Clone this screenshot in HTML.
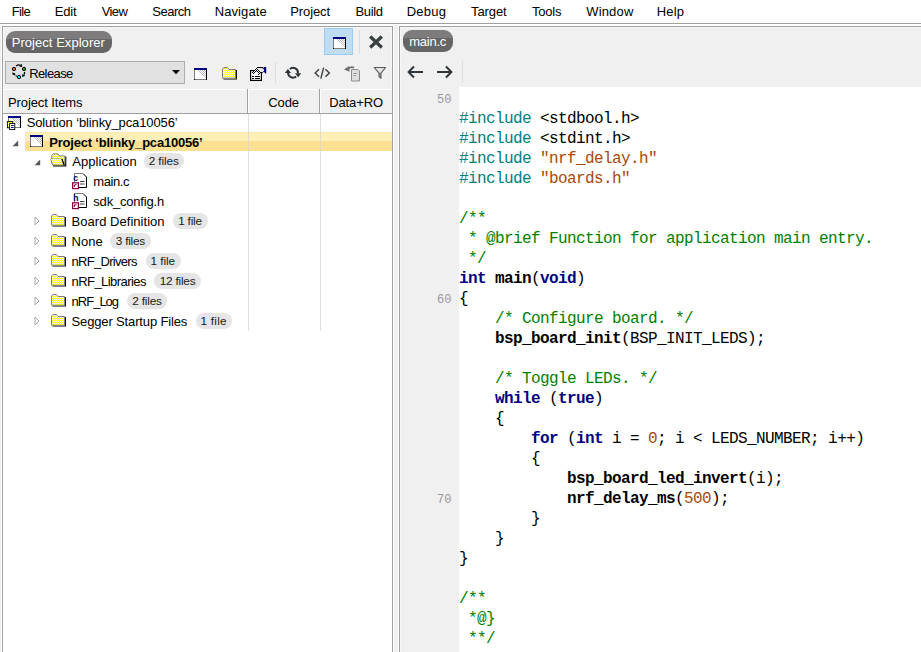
<!DOCTYPE html>
<html><head><meta charset="utf-8"><title>IDE</title>
<style>
html,body{margin:0;padding:0;}
body{width:921px;height:652px;overflow:hidden;background:#fff;position:relative;font-family:"Liberation Sans",sans-serif;font-size:13px;color:#000;}
.abs{position:absolute;}
.pill{position:absolute;border-radius:9px;height:22px;}
.t{position:absolute;white-space:nowrap;line-height:20px;height:20px;}
.badge{position:absolute;background:#e5e5e5;border-radius:8.3px;height:16.6px;}
.code{position:absolute;left:459px;top:89px;margin:0;font-family:"Liberation Mono",monospace;font-size:16px;letter-spacing:-0.6px;line-height:20px;white-space:pre;color:#000;}
.code b{font-weight:bold;}
.k{color:#000080;font-weight:bold;}
.p{color:#008080;}
.s{color:#a8480a;}
.c{color:#008000;}
.ln{position:absolute;width:30px;text-align:right;left:421.5px;font-family:"Liberation Mono",monospace;font-size:12px;line-height:20px;color:#9a9a9a;}
</style></head><body>
<svg width="0" height="0" style="position:absolute"><defs>
<pattern id="chk" width="2" height="2" patternUnits="userSpaceOnUse"><rect width="2" height="2" fill="#fff"/><rect width="1" height="1" fill="#000"/><rect x="1" y="1" width="1" height="1" fill="#000"/></pattern>
<pattern id="chkg" width="2" height="2" patternUnits="userSpaceOnUse"><rect width="2" height="2" fill="#fff"/><rect width="1" height="1" fill="#c0c0c0"/><rect x="1" y="1" width="1" height="1" fill="#c0c0c0"/></pattern>
<pattern id="chky" width="2" height="2" patternUnits="userSpaceOnUse"><rect width="2" height="2" fill="#ffff00"/><rect width="1" height="1" fill="#fff"/><rect x="1" y="1" width="1" height="1" fill="#fff"/></pattern>
</defs></svg>
<div class="abs" style="left:0;top:23px;width:921px;height:1px;background:#a0a0a0"></div>
<div class="abs" style="left:0;top:25px;width:1px;height:627px;background:#f0f0f0"></div>
<div class="abs" style="left:394px;top:25px;width:4px;height:627px;background:#f0f0f0"></div>
<!-- left panel frame -->
<div class="abs" style="left:2px;top:26px;width:391px;height:640px;border:1px solid #a0a0a0;box-sizing:border-box;background:#f0f0f0;box-shadow:inset 1px 1px 0 #f7f7f7,inset -1px 0 0 #f7f7f7"></div>
<!-- right panel frame -->
<div class="abs" style="left:399px;top:26px;width:540px;height:640px;border:1px solid #a0a0a0;box-sizing:border-box;background:#f0f0f0;box-shadow:inset 1px 1px 0 #f7f7f7"></div>

<div class="pill" style="left:6px;top:31px;width:106px;background:linear-gradient(#7d7b7b 0,#7d7b7b 8px,#666 8px,#666 100%)"></div>
<div class="pill" style="left:403px;top:30px;width:50px;background:linear-gradient(#7d7b7b 0,#7d7b7b 8px,#666 8px,#666 100%)"></div>
<div class="abs" style="left:324px;top:28px;width:29px;height:27px;background:#bfdcf2;border:1px solid #99ccf5;box-sizing:border-box"></div>
<svg class="abs" style="left:333px;top:37px" width="13" height="12" viewBox="0 0 13 12" preserveAspectRatio="none" shape-rendering="crispEdges"><rect x="0" y="0" width="13" height="12" fill="#fff"/><polygon points="2,2 12,2 12,11" fill="url(#chkg)"/><rect x="0" y="0" width="13" height="2" fill="#000080"/><rect x="0" y="2" width="1" height="10" fill="#808080"/><rect x="12" y="2" width="1" height="10" fill="#000"/><rect x="1" y="11" width="11" height="1" fill="#808080"/><rect x="0" y="11" width="1" height="1" fill="#000"/></svg>
<div class="abs" style="left:359px;top:30px;width:1px;height:24px;background:#dcdcdc"></div>
<svg class="abs" style="left:368px;top:34px" width="16" height="16" viewBox="0 0 16 16"><path d="M2.2,2.5 L13.8,13.5 M13.8,2.5 L2.2,13.5" stroke="#3a3f42" stroke-width="3.2" fill="none"/></svg>
<div class="abs" style="left:5px;top:61px;width:180px;height:23px;background:#e1e1e1;border:1px solid #adadad;box-sizing:border-box"></div>
<svg class="abs" style="left:171px;top:69px" width="10" height="6" viewBox="0 0 10 6"><polygon points="1,1 9,1 5,5.2" fill="#000"/></svg>
<svg class="abs" style="left:10px;top:63px" width="18" height="18" viewBox="0 0 18 18"><g fill="none" stroke="#000" stroke-width="1.3"><path d="M6,3 Q8.4,1.2 10.6,2.4"/><path d="M14.6,9 L14.2,11.6" /><path d="M4,11 L6.6,13.4" stroke-dasharray="1.6 0.8"/></g><polygon points="12.1,0.8 12,4 9.2,3.5" fill="#000"/><polygon points="12,13.9 12.4,11 15.3,12.8" fill="#000"/><polygon points="2,9.4 5.2,10.2 3,12.2" fill="#000"/><circle cx="4" cy="6" r="1.7" fill="#e86000" stroke="#000" stroke-width="1"/><circle cx="14" cy="6" r="1.7" fill="#00a000" stroke="#000" stroke-width="1"/><circle cx="9" cy="14" r="1.7" fill="#00c8f0" stroke="#000" stroke-width="1"/></svg>
<svg class="abs" style="left:194px;top:68px" width="13" height="12" viewBox="0 0 13 12" preserveAspectRatio="none" shape-rendering="crispEdges"><rect x="0" y="0" width="13" height="12" fill="#fff"/><polygon points="2,2 12,2 12,11" fill="url(#chkg)"/><rect x="0" y="0" width="13" height="2" fill="#000080"/><rect x="0" y="2" width="1" height="10" fill="#808080"/><rect x="12" y="2" width="1" height="10" fill="#000"/><rect x="1" y="11" width="11" height="1" fill="#808080"/><rect x="0" y="11" width="1" height="1" fill="#000"/></svg>
<svg class="abs" style="left:222px;top:67px" width="15" height="13" viewBox="0 0 15 13"><path d="M1.5,12 H14.4 V3" fill="none" stroke="#000" stroke-width="1.1"/><path d="M0.5,11.2 V2 L1.8,0.5 H5.6 L7,2.5 H13.5 V11.2 Z" fill="url(#chky)" stroke="#808080" stroke-width="1"/></svg>
<svg class="abs" style="left:250px;top:66px" width="17" height="16" viewBox="0 0 17 16"><rect x="0.6" y="4.6" width="10.8" height="9.8" fill="#fff" stroke="#000" stroke-width="1.2"/><path d="M2,10.5 H4 M5,10.5 H10 M2,12.5 H4 M5,12.5 H10" stroke="#000" stroke-width="1.1"/><path d="M7.2,1.3 H12.6 L13.6,2.6 V5.4 L12.4,6.6 H9 Z" fill="#e4e4e4"/><path d="M2,6.6 L3.5,8.4 L6.4,4.6 L8.5,9 L10.6,6.4 L7,1.8 Z" fill="url(#chk)" shape-rendering="crispEdges"/><path d="M7,1.5 H12.6 L13.8,2.8" fill="none" stroke="#000" stroke-width="1.1"/><path d="M10.6,6.6 H12.4 L13.8,5.4" fill="none" stroke="#000" stroke-width="1"/><path d="M14,1 H16.2 V8 L15.6,7.6 L14,6 Z" fill="#000080"/></svg>
<div class="abs" style="left:275px;top:62px;width:1px;height:22px;background:#dcdcdc"></div>
<svg class="abs" style="left:284px;top:65px" width="18" height="16" viewBox="0 0 18 16"><g fill="none" stroke="#2b3134" stroke-width="2"><path d="M5.85,4.05 A4.9,4.9 0 0 1 13.9,8.4"/><path d="M4.1,7.6 A4.9,4.9 0 0 0 12.15,11.55"/></g><polygon points="0.8,8 3.9,4 7,8" fill="#2b3134"/><polygon points="11,8.2 17.2,8.2 14.1,12.2" fill="#2b3134"/></svg>
<svg class="abs" style="left:314px;top:66px" width="17" height="14" viewBox="0 0 17 14"><g fill="none" stroke="#3a3f42" stroke-width="1.4"><path d="M5,3.2 L1.2,7 L5,10.8"/><path d="M11.5,3.2 L15.3,7 L11.5,10.8"/><path d="M9.6,1.6 L6.8,12.6"/></g></svg>
<svg class="abs" style="left:343px;top:64px" width="19" height="19" viewBox="0 0 19 19"><path d="M8.5,5.5 H15 L16.5,7 V17 H8.5 Z" fill="#dedede" stroke="#8c8c8c" stroke-width="1"/><path d="M10.5,9.5 H14 M10.5,11.5 H13" stroke="#9a9a9a" stroke-width="1"/><path d="M4.5,5.5 Q7,2.2 11,3.6" fill="none" stroke="#707070" stroke-width="1.8"/><polygon points="1,5.4 6,2 6.6,7.8" fill="#707070"/></svg>
<svg class="abs" style="left:373px;top:66px" width="14" height="14" viewBox="0 0 14 14"><path d="M1.2,1.5 H12.6 L8,7.2 V12.2 L6,10.6 V7.2 Z" fill="#e2e2e2" stroke="#5a5a5a" stroke-width="1.1" stroke-linejoin="round"/><path d="M7,7 V11.4" stroke="#707070" stroke-width="1.6"/></svg>
<svg class="abs" style="left:406px;top:64px" width="18" height="16" viewBox="0 0 18 16"><path d="M8,2.5 L2.6,8 L8,13.5 M2.6,8 H17" fill="none" stroke="#2f3538" stroke-width="2"/></svg>
<svg class="abs" style="left:436px;top:64px" width="18" height="16" viewBox="0 0 18 16"><path d="M10,2.5 L15.4,8 L10,13.5 M15.4,8 H1" fill="none" stroke="#2f3538" stroke-width="2"/></svg>
<div class="abs" style="left:462px;top:61px;width:1px;height:22px;background:#dcdcdc"></div>
<div class="abs" style="left:3px;top:89px;width:389px;height:24px;background:#f0f0f0"></div>
<div class="abs" style="left:3px;top:113px;width:389px;height:1px;background:#a0a0a0"></div>
<div class="abs" style="left:3px;top:114px;width:389px;height:538px;background:#fff"></div>
<div class="abs" style="left:3px;top:89px;width:389px;height:1px;background:#fff"></div>
<div class="abs" style="left:3px;top:89px;width:1px;height:24px;background:#fff"></div>
<div class="abs" style="left:247px;top:89px;width:1px;height:25px;background:#a0a0a0"></div>
<div class="abs" style="left:248px;top:89px;width:1px;height:24px;background:#fff"></div>
<div class="abs" style="left:319px;top:89px;width:1px;height:25px;background:#a0a0a0"></div>
<div class="abs" style="left:320px;top:89px;width:1px;height:24px;background:#fff"></div>
<div class="abs" style="left:25px;top:132px;width:367px;height:19px;background:linear-gradient(#fce8a8 0,#fce8a8 1px,#feefb6 1px,#feefb6 9px,#fde092 9px,#fde092 100%)"></div>
<div class="abs" style="left:248px;top:114px;width:1px;height:217px;background:rgba(212,212,212,0.72)"></div>
<div class="abs" style="left:320px;top:114px;width:1px;height:217px;background:rgba(212,212,212,0.72)"></div>
<svg class="abs" style="left:8px;top:116px" width="13" height="12" viewBox="0 0 13 12" preserveAspectRatio="none" shape-rendering="crispEdges"><rect x="0" y="0" width="13" height="12" fill="#fff"/><polygon points="2,2 12,2 12,11" fill="url(#chkg)"/><rect x="0" y="0" width="13" height="2" fill="#000080"/><rect x="0" y="2" width="1" height="10" fill="#808080"/><rect x="12" y="2" width="1" height="10" fill="#000"/><rect x="1" y="11" width="11" height="1" fill="#808080"/><rect x="0" y="11" width="1" height="1" fill="#000"/></svg>
<svg class="abs" style="left:6px;top:121px" width="10" height="10" viewBox="0 0 10 10"><rect x="1.4" y="0.6" width="5.4" height="6.2" fill="url(#chky)" stroke="#000" stroke-width="0.9"/><rect x="3.6" y="2.4" width="5.2" height="6.2" fill="#fff" stroke="#000" stroke-width="0.9"/><rect x="5" y="4" width="2.6" height="1" fill="#000080"/><rect x="5" y="6" width="2.6" height="1" fill="#000080"/></svg>
<svg class="abs" style="left:11.9px;top:139.6px" width="7" height="7" viewBox="0 0 7 7"><polygon points="0.6,6.2 6.2,6.2 6.2,0.6" fill="#555"/></svg>
<svg class="abs" style="left:30px;top:135px" width="13" height="12" viewBox="0 0 13 12" preserveAspectRatio="none" shape-rendering="crispEdges"><rect x="0" y="0" width="13" height="12" fill="#fff"/><polygon points="2,2 12,2 12,11" fill="url(#chkg)"/><rect x="0" y="0" width="13" height="2" fill="#000080"/><rect x="0" y="2" width="1" height="10" fill="#808080"/><rect x="12" y="2" width="1" height="10" fill="#000"/><rect x="1" y="11" width="11" height="1" fill="#808080"/><rect x="0" y="11" width="1" height="1" fill="#000"/></svg>
<svg class="abs" style="left:34px;top:158.6px" width="7" height="7" viewBox="0 0 7 7"><polygon points="0.6,6.2 6.2,6.2 6.2,0.6" fill="#555"/></svg>
<svg class="abs" style="left:50px;top:153.4px" width="17" height="14" viewBox="0 0 17 14"><path d="M3,12.9 H15.7 V3.6" fill="none" stroke="#000" stroke-width="1.2"/><path d="M1.8,6 V2.4 L3,0.9 H8 L9,2.9 H14.8 V12 H3 Z" fill="url(#chky)" stroke="#808080" stroke-width="1"/><path d="M0.6,6.1 H11.8 L14,12.1 H2.6 Z" fill="url(#chky)" stroke="#707070" stroke-width="1"/><path d="M0.6,6.6 H11.4" stroke="#fff" stroke-width="0.9"/><path d="M11.9,6 L14.2,12.2" stroke="#000" stroke-width="1.2"/></svg>
<svg class="abs" style="left:71.5px;top:172.5px" width="16" height="17" viewBox="0 0 16 17"><path d="M2.5,0.5 H11 L14.5,4 V14.5 H2.5 Z" fill="#fff" stroke="#000" stroke-width="1"/><path d="M2.5,14 V0.5 H11" fill="none" stroke="#808080" stroke-width="1"/><path d="M8,8.5 H12.5 M8,11 H12.5" stroke="#404040" stroke-width="1"/><text x="1.2" y="8.2" font-family="Liberation Sans, sans-serif" font-weight="bold" font-size="8.5" fill="#00006a">c</text><rect x="0.6" y="9.8" width="5.8" height="5.8" fill="#fff" stroke="#800040" stroke-width="1.2"/><path d="M2.3,14 V12.4 Q2.4,11.6 4.6,11.8" fill="none" stroke="#800040" stroke-width="1.1"/></svg>
<svg class="abs" style="left:71.5px;top:192.5px" width="16" height="17" viewBox="0 0 16 17"><path d="M2.5,0.5 H11 L14.5,4 V14.5 H2.5 Z" fill="#fff" stroke="#000" stroke-width="1"/><path d="M2.5,14 V0.5 H11" fill="none" stroke="#808080" stroke-width="1"/><path d="M8,8.5 H12.5 M8,11 H12.5" stroke="#404040" stroke-width="1"/><text x="1.2" y="8.2" font-family="Liberation Sans, sans-serif" font-weight="bold" font-size="8.5" fill="#00006a">h</text><rect x="0.6" y="9.8" width="5.8" height="5.8" fill="#fff" stroke="#800040" stroke-width="1.2"/><path d="M2.3,14 V12.4 Q2.4,11.6 4.6,11.8" fill="none" stroke="#800040" stroke-width="1.1"/></svg>
<svg class="abs" style="left:33.6px;top:216px" width="7" height="10" viewBox="0 0 7 10"><polygon points="1,1 5,5 1,9" fill="#fff" stroke="#a6a6a6" stroke-width="1"/></svg>
<svg class="abs" style="left:51.2px;top:214.4px" width="15" height="13" viewBox="0 0 15 13"><path d="M1.5,12 H14.4 V3" fill="none" stroke="#000" stroke-width="1.1"/><path d="M0.5,11.2 V2 L1.8,0.5 H5.6 L7,2.5 H13.5 V11.2 Z" fill="url(#chky)" stroke="#808080" stroke-width="1"/></svg>
<svg class="abs" style="left:33.6px;top:236px" width="7" height="10" viewBox="0 0 7 10"><polygon points="1,1 5,5 1,9" fill="#fff" stroke="#a6a6a6" stroke-width="1"/></svg>
<svg class="abs" style="left:51.2px;top:234.4px" width="15" height="13" viewBox="0 0 15 13"><path d="M1.5,12 H14.4 V3" fill="none" stroke="#000" stroke-width="1.1"/><path d="M0.5,11.2 V2 L1.8,0.5 H5.6 L7,2.5 H13.5 V11.2 Z" fill="url(#chky)" stroke="#808080" stroke-width="1"/></svg>
<svg class="abs" style="left:33.6px;top:256px" width="7" height="10" viewBox="0 0 7 10"><polygon points="1,1 5,5 1,9" fill="#fff" stroke="#a6a6a6" stroke-width="1"/></svg>
<svg class="abs" style="left:51.2px;top:254.4px" width="15" height="13" viewBox="0 0 15 13"><path d="M1.5,12 H14.4 V3" fill="none" stroke="#000" stroke-width="1.1"/><path d="M0.5,11.2 V2 L1.8,0.5 H5.6 L7,2.5 H13.5 V11.2 Z" fill="url(#chky)" stroke="#808080" stroke-width="1"/></svg>
<svg class="abs" style="left:33.6px;top:276px" width="7" height="10" viewBox="0 0 7 10"><polygon points="1,1 5,5 1,9" fill="#fff" stroke="#a6a6a6" stroke-width="1"/></svg>
<svg class="abs" style="left:51.2px;top:274.4px" width="15" height="13" viewBox="0 0 15 13"><path d="M1.5,12 H14.4 V3" fill="none" stroke="#000" stroke-width="1.1"/><path d="M0.5,11.2 V2 L1.8,0.5 H5.6 L7,2.5 H13.5 V11.2 Z" fill="url(#chky)" stroke="#808080" stroke-width="1"/></svg>
<svg class="abs" style="left:33.6px;top:296px" width="7" height="10" viewBox="0 0 7 10"><polygon points="1,1 5,5 1,9" fill="#fff" stroke="#a6a6a6" stroke-width="1"/></svg>
<svg class="abs" style="left:51.2px;top:294.4px" width="15" height="13" viewBox="0 0 15 13"><path d="M1.5,12 H14.4 V3" fill="none" stroke="#000" stroke-width="1.1"/><path d="M0.5,11.2 V2 L1.8,0.5 H5.6 L7,2.5 H13.5 V11.2 Z" fill="url(#chky)" stroke="#808080" stroke-width="1"/></svg>
<svg class="abs" style="left:33.6px;top:316px" width="7" height="10" viewBox="0 0 7 10"><polygon points="1,1 5,5 1,9" fill="#fff" stroke="#a6a6a6" stroke-width="1"/></svg>
<svg class="abs" style="left:51.2px;top:314.4px" width="15" height="13" viewBox="0 0 15 13"><path d="M1.5,12 H14.4 V3" fill="none" stroke="#000" stroke-width="1.1"/><path d="M0.5,11.2 V2 L1.8,0.5 H5.6 L7,2.5 H13.5 V11.2 Z" fill="url(#chky)" stroke="#808080" stroke-width="1"/></svg>
<div class="badge" style="left:143.7px;top:152.8px;width:40.7px"></div>
<div class="badge" style="left:172.9px;top:212.8px;width:34.8px"></div>
<div class="badge" style="left:110.4px;top:232.8px;width:40.7px"></div>
<div class="badge" style="left:145.6px;top:252.8px;width:35.4px"></div>
<div class="badge" style="left:154.4px;top:272.8px;width:46.6px"></div>
<div class="badge" style="left:126.9px;top:292.8px;width:40.4px"></div>
<div class="badge" style="left:195.6px;top:312.8px;width:36.2px"></div>
<div class="t" id="m1" style="left:11.69px;top:1.9px;letter-spacing:-0.600px;">File</div>
<div class="t" id="m2" style="left:54.69px;top:1.9px;letter-spacing:-0.180px;">Edit</div>
<div class="t" id="m3" style="left:101.69px;top:1.9px;letter-spacing:-0.600px;">View</div>
<div class="t" id="m4" style="left:152.19px;top:1.9px;letter-spacing:-0.468px;">Search</div>
<div class="t" id="m5" style="left:214.69px;top:1.9px;letter-spacing:0.100px;">Navigate</div>
<div class="t" id="m6" style="left:290.19px;top:1.9px;letter-spacing:-0.090px;">Project</div>
<div class="t" id="m7" style="left:355.55px;top:1.9px;letter-spacing:-0.360px;">Build</div>
<div class="t" id="m8" style="left:406.69px;top:1.9px;letter-spacing:0.276px;">Debug</div>
<div class="t" id="m9" style="left:471.05px;top:1.9px;letter-spacing:-0.108px;">Target</div>
<div class="t" id="m10" style="left:532.00px;top:1.9px;letter-spacing:-0.224px;">Tools</div>
<div class="t" id="m11" style="left:586.19px;top:1.9px;letter-spacing:0.180px;">Window</div>
<div class="t" id="m12" style="left:656.69px;top:1.9px;letter-spacing:0.180px;">Help</div>
<div class="t" id="pe" style="left:11.69px;top:33px;letter-spacing:0.048px;color:#fff">Project Explorer</div>
<div class="t" id="mc" style="left:409.20px;top:32px;letter-spacing:-0.240px;color:#fff">main.c</div>
<div class="t" id="rel" style="left:29.19px;top:64px;letter-spacing:-0.600px;">Release</div>
<div class="t" id="h1" style="left:8.05px;top:93px;letter-spacing:-0.114px;">Project Items</div>
<div class="t" id="h2" style="left:268.29px;top:93px;letter-spacing:-0.120px;">Code</div>
<div class="t" id="h3" style="left:329.20px;top:93px;letter-spacing:-0.120px;">Data+RO</div>
<div class="t" id="t0" style="left:26.69px;top:113px;letter-spacing:-0.120px;">Solution ‘blinky_pca10056’</div>
<div class="t" id="t1" style="left:49.19px;top:133px;letter-spacing:-0.197px;font-weight:bold">Project ‘blinky_pca10056’</div>
<div class="t" id="t2" style="left:72.19px;top:151.5px;letter-spacing:0.090px;">Application</div>
<div class="t" id="t3" style="left:93.29px;top:171.5px;letter-spacing:-0.396px;">main.c</div>
<div class="t" id="t4" style="left:93.29px;top:191.5px;letter-spacing:-0.192px;">sdk_config.h</div>
<div class="t" id="t5" style="left:71.55px;top:211.5px;letter-spacing:0.036px;">Board Definition</div>
<div class="t" id="t6" style="left:71.55px;top:231.5px;letter-spacing:0.060px;">None</div>
<div class="t" id="t7" style="left:71.55px;top:251.5px;letter-spacing:-0.702px;">nRF_Drivers</div>
<div class="t" id="t8" style="left:71.55px;top:271.5px;letter-spacing:-0.555px;">nRF_Libraries</div>
<div class="t" id="t9" style="left:71.55px;top:291.5px;letter-spacing:-0.990px;">nRF_Log</div>
<div class="t" id="t10" style="left:71.55px;top:311.5px;letter-spacing:-0.142px;">Segger Startup Files</div>
<div class="t" id="b2" style="left:148.70px;top:151.0px;letter-spacing:-0.090px;font-size:11.8px;color:#1a1a1a">2 files</div>
<div class="t" id="b5" style="left:178.29px;top:211.0px;letter-spacing:-0.252px;font-size:11.8px;color:#1a1a1a">1 file</div>
<div class="t" id="b6" style="left:115.79px;top:231.0px;letter-spacing:-0.240px;font-size:11.8px;color:#1a1a1a">3 files</div>
<div class="t" id="b7" style="left:150.43px;top:251.0px;letter-spacing:-0.036px;font-size:11.8px;color:#1a1a1a">1 file</div>
<div class="t" id="b8" style="left:159.79px;top:271.0px;letter-spacing:-0.230px;font-size:11.8px;color:#1a1a1a">12 files</div>
<div class="t" id="b9" style="left:132.29px;top:291.0px;letter-spacing:-0.180px;font-size:11.8px;color:#1a1a1a">2 files</div>
<div class="t" id="b10" style="left:200.43px;top:311.0px;letter-spacing:0.252px;font-size:11.8px;color:#1a1a1a">1 file</div>
<div class="abs" style="left:459px;top:87px;width:462px;height:565px;background:#fff"></div>
<div class="ln" style="top:90px">50</div><div class="ln" style="top:290px">60</div><div class="ln" style="top:490px">70</div>
<pre class="code">

<span class="p">#include</span> &lt;stdbool.h&gt;
<span class="p">#include</span> &lt;stdint.h&gt;
<span class="p">#include</span> <span class="s">"nrf_delay.h"</span>
<span class="p">#include</span> <span class="s">"boards.h"</span>

<span class="c">/**</span>
<span class="c"> * @brief Function for application main entry.</span>
<span class="c"> */</span>
<span class="k">int</span> <b>main</b>(<span class="k">void</span>)
{
    <span class="c">/* Configure board. */</span>
    <b>bsp_board_init</b>(BSP_INIT_LEDS);

    <span class="c">/* Toggle LEDs. */</span>
    <span class="k">while</span> (<span class="k">true</span>)
    {
        <span class="k">for</span> (<span class="k">int</span> i = <span class="s">0</span>; i &lt; LEDS_NUMBER; i++)
        {
            <b>bsp_board_led_invert</b>(i);
            <b>nrf_delay_ms</b>(<span class="s">500</span>);
        }
    }
}

<span class="c">/**</span>
<span class="c"> *@}</span>
<span class="c"> **/</span>
</pre>
</body></html>
